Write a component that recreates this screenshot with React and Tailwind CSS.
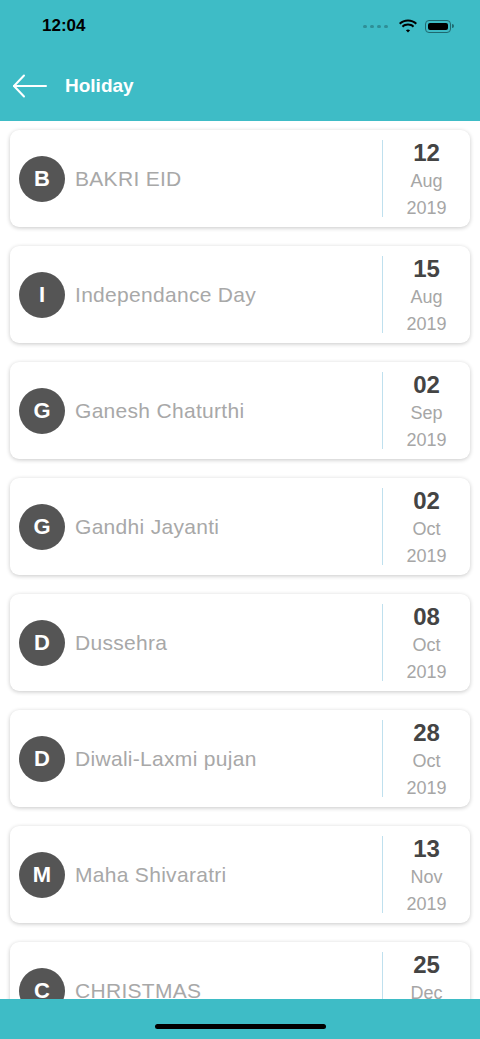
import React from 'react';

const holidays = [
  { name: 'BAKRI EID', day: '12', month: 'Aug', year: '2019' },
  { name: 'Independance Day', day: '15', month: 'Aug', year: '2019' },
  { name: 'Ganesh Chaturthi', day: '02', month: 'Sep', year: '2019' },
  { name: 'Gandhi Jayanti', day: '02', month: 'Oct', year: '2019' },
  { name: 'Dussehra', day: '08', month: 'Oct', year: '2019' },
  { name: 'Diwali-Laxmi pujan', day: '28', month: 'Oct', year: '2019' },
  { name: 'Maha Shivaratri', day: '13', month: 'Nov', year: '2019' },
  { name: 'CHRISTMAS', day: '25', month: 'Dec', year: '2019' },
];

const StatusBar = () => (
  <div className="h-[50px] flex items-center justify-between pl-[42px] pr-[26px] pt-[2px]">
    <span className="text-[17px] font-bold text-black">12:04</span>
    <div className="flex items-center gap-[7px]">
      <div className="flex items-center gap-[3px] mr-[3px]">
        <span className="w-[4px] h-[3px] rounded-full bg-[#2f8f97]"></span>
        <span className="w-[4px] h-[3px] rounded-full bg-[#2f8f97]"></span>
        <span className="w-[4px] h-[3px] rounded-full bg-[#2f8f97]"></span>
        <span className="w-[4px] h-[3px] rounded-full bg-[#2f8f97]"></span>
      </div>
      <svg width="20" height="14" viewBox="0 0 17 12">
        <path d="M8.5 2.2c2.5 0 4.8 1 6.5 2.6l1.2-1.3C14.2 1.6 11.5.5 8.5.5S2.8 1.6.8 3.5L2 4.8C3.7 3.2 6 2.2 8.5 2.2z" fill="#000" />
        <path d="M8.5 5.6c1.6 0 3 .6 4.1 1.6l1.2-1.3C12.4 4.6 10.5 3.9 8.5 3.9S4.6 4.6 3.2 5.9l1.2 1.3c1.1-1 2.5-1.6 4.1-1.6z" fill="#000" />
        <path d="M8.5 8.9c.7 0 1.3.3 1.8.7L8.5 11.6 6.7 9.6c.5-.4 1.100-.7 1.8-.7z" fill="#000" />
      </svg>
      <div className="flex items-center">
        <div className="w-[26px] h-[13px] rounded-[4px] border border-[#1f6970] p-[2px]">
          <div className="w-full h-full rounded-[2px] bg-black"></div>
        </div>
        <div className="w-[2px] h-[4px] bg-[#1f6970] rounded-r-sm ml-[1px]"></div>
      </div>
    </div>
  </div>
);

const HolidayCard = ({ item }) => (
  <div className="h-[97px] shrink-0 bg-white rounded-[9px] shadow-[0_1px_4px_rgba(0,0,0,0.22)] flex items-center pl-[9px]">
    <div className="w-[46px] h-[46px] rounded-full bg-[#555555] flex items-center justify-center shrink-0">
      <span className="text-white text-[22px] font-bold leading-none">{item.name[0].toUpperCase()}</span>
    </div>
    <div className="flex-1 pl-[10px] text-[21px] tracking-[0.3px] text-[#a8a8a8] truncate">{item.name}</div>
    <div className="w-px h-[77px] bg-[#bfe0ee]"></div>
    <div className="w-[87px] flex flex-col items-center pt-[2px]">
      <span className="text-[24px] font-bold text-[#444444] leading-[30px]">{item.day}</span>
      <span className="text-[18px] text-[#a6a6a6] leading-[27px]">{item.month}</span>
      <span className="text-[18px] text-[#a6a6a6] leading-[27px]">{item.year}</span>
    </div>
  </div>
);

export default function App() {
  return (
    <div className="w-[480px] h-[1039px] flex flex-col bg-white overflow-hidden font-['Liberation_Sans',Arial,sans-serif]">
      <div className="h-[121px] bg-[#3ebcc6] shrink-0">
        <StatusBar />
        <div className="h-[71px] flex items-center pl-[12px] pt-[1px]">
          <svg width="36" height="24" viewBox="0 0 36 24" fill="none" stroke="#fff" strokeWidth="2" strokeLinecap="round" strokeLinejoin="round">
            <path d="M34 12H2" />
            <path d="M12 1.5L2 12l10 10.5" />
          </svg>
          <span className="ml-[17px] text-white text-[19px] font-bold">Holiday</span>
        </div>
      </div>
      <div className="flex-1 overflow-hidden px-[10px] pt-[9px] flex flex-col gap-[19px]">
        {holidays.map((h) => (
          <HolidayCard key={h.name} item={h} />
        ))}
      </div>
      <div className="h-[40px] bg-[#3ebcc6] shrink-0 flex items-center justify-center pt-[14px]">
        <div className="w-[171px] h-[5px] rounded-full bg-black"></div>
      </div>
    </div>
  );
}
